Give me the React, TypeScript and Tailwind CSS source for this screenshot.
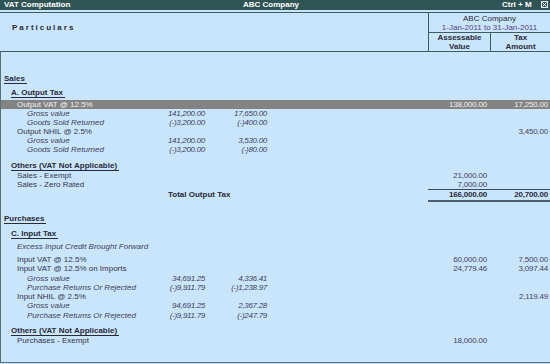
import React from "react";

const GRID = "grid grid-cols-[144px_62px_62px_159px_62px_60px]";

type LineProps = {
  label: string;
  pl: string;
  italic?: boolean;
  s1?: string;
  s2?: string;
  a?: string;
  t?: string;
  hl?: boolean;
  mt?: string;
  h?: string;
};

function Line({ label, pl, italic, s1, s2, a, t, hl, mt = "", h = "h-[9px] leading-[9px]" }: LineProps) {
  const base = hl ? "bg-[#838383] text-[#f2f2f2]" : "text-[#34344a]";
  const it = italic ? "italic text-[#3e3e5a]" : "";
  return (
    <div className={`${GRID} ${h} ${mt} ${base} whitespace-nowrap`}>
      <div className={`${pl} ${it}`}>{label}</div>
      <div className={`text-right pr-[2px] italic tracking-[-0.3px] ${hl ? "" : "text-[#3e3e5a]"}`}>{s1}</div>
      <div className={`text-right pr-[2px] italic tracking-[-0.3px] ${hl ? "" : "text-[#3e3e5a]"}`}>{s2}</div>
      <div />
      <div className={`text-right pr-[3px] tracking-[-0.2px] ${hl ? "" : "text-[#45405f]"}`}>{a}</div>
      <div className={`text-right pr-[2px] tracking-[-0.2px] ${hl ? "" : "text-[#45405f]"}`}>{t}</div>
    </div>
  );
}

function Head({ text, pl, mt }: { text: string; pl: string; mt: string }) {
  return (
    <div className={`h-[10px] ${mt} ${pl}`}>
      <span className="inline-block leading-[8px] font-bold text-[#2a2a38] border-b border-[#2a2a38] pr-[2px]">
        {text}
      </span>
    </div>
  );
}

export default function App() {
  return (
    <div className="w-[550px] h-[364px] bg-[#c9e5fc] overflow-hidden font-['Liberation_Sans',Arial,sans-serif] text-[8px] select-none">
      {/* Title bar */}
      <div className="h-[10px] bg-[#2f5454] text-white font-bold leading-[10px] flex items-center relative">
        <span className="pl-[4px]">VAT Computation</span>
        <span className="absolute left-[243px]">ABC Company</span>
        <span className="absolute left-[502px]">Ctrl + M</span>
        <span className="absolute left-[541px] top-[1px] w-[7px] h-[7px] border border-[#dfe8e8] flex items-center justify-center">
          <svg width="5" height="5" viewBox="0 0 5 5">
            <path d="M0.5 0.5 L4.5 4.5 M4.5 0.5 L0.5 4.5" stroke="#ffffff" strokeWidth="1" />
          </svg>
        </span>
      </div>
      {/* Header */}
      <div className="mt-[2px] h-[40px] border-t border-b border-[#3d5d63] flex">
        <div className="flex-1 pl-[12px] pt-[10px] leading-[9px] font-bold tracking-[2px] text-[#2a2a38]">
          Particulars
        </div>
        <div className="w-[122px] border-l border-[#3d5d63] flex flex-col">
          <div className="h-[20px] border-b border-[#3d5d63] text-center leading-[9px] pt-[1px]">
            <div className="text-[#2a2a38]">ABC Company</div>
            <div className="text-[#5a3f8a]">1-Jan-2011 to 31-Jan-2011</div>
          </div>
          <div className="flex-1 flex font-bold text-[#2a2a38] leading-[9px]">
            <div className="w-[62px] border-r border-[#3d5d63] text-center pt-[0px]">
              <div>Assessable</div>
              <div>Value</div>
            </div>
            <div className="flex-1 text-center pt-[0px]">
              <div>Tax</div>
              <div>Amount</div>
            </div>
          </div>
        </div>
      </div>
      {/* Body */}
      <div className="h-[311px] border-l border-b border-[#59707a] flex flex-col">
        <Head text="Sales" pl="pl-[3px]" mt="mt-[21px]" />
        <Head text="A. Output Tax" pl="pl-[10px]" mt="mt-[4px]" />
        <Line label="Output VAT @ 12.5%" pl="pl-[16px]" a="138,000.00" t="17,250.00" hl mt="mt-[3px]" />
        <Line label="Gross value" pl="pl-[26px]" italic s1="141,200.00" s2="17,650.00" />
        <Line label="Goods Sold Returned" pl="pl-[26px]" italic s1="(-)3,200.00" s2="(-)400.00" />
        <Line label="Output NHIL @ 2.5%" pl="pl-[16px]" t="3,450.00" />
        <Line label="Gross value" pl="pl-[26px]" italic s1="141,200.00" s2="3,530.00" />
        <Line label="Goods Sold Returned" pl="pl-[26px]" italic s1="(-)3,200.00" s2="(-)80.00" />
        <Head text="Others (VAT Not Applicable)" pl="pl-[10px]" mt="mt-[6px]" />
        <Line label="Sales - Exempt" pl="pl-[16px]" a="21,000.00" mt="mt-[1px]" />
        <Line label="Sales - Zero Rated" pl="pl-[16px]" a="7,000.00" />
        {/* Total row */}
        <div className={`${GRID} h-[13px] leading-[10px] font-bold text-[#2a2a38] whitespace-nowrap`}>
          <div className="col-span-4 pl-[167px] pt-[1px]">Total Output Tax</div>
          <div className="border-t border-b-2 border-t-[#3d4d5d] border-b-[#4d5d6d] text-right pr-[3px] tracking-[-0.2px]">166,000.00</div>
          <div className="border-t border-b-2 border-t-[#3d4d5d] border-b-[#4d5d6d] text-right pr-[2px] tracking-[-0.2px]">20,700.00</div>
        </div>
        <Head text="Purchases" pl="pl-[3px]" mt="mt-[11px]" />
        <Head text="C. Input Tax" pl="pl-[10px]" mt="mt-[5px]" />
        <Line label="Excess Input Credit Brought Forward" pl="pl-[16px]" italic mt="mt-[4px]" />
        <Line label="Input VAT @ 12.5%" pl="pl-[16px]" a="60,000.00" t="7,500.00" mt="mt-[4px]" h="h-[9.3px] leading-[9px]" />
        <Line label="Input VAT @ 12.5% on Imports" pl="pl-[16px]" a="24,779.46" t="3,097.44" h="h-[9.3px] leading-[9px]" />
        <Line label="Gross value" pl="pl-[26px]" italic s1="34,691.25" s2="4,336.41" h="h-[9.3px] leading-[9px]" />
        <Line label="Purchase Returns Or Rejected" pl="pl-[26px]" italic s1="(-)9,911.79" s2="(-)1,238.97" h="h-[9.3px] leading-[9px]" />
        <Line label="Input NHIL @ 2.5%" pl="pl-[16px]" t="2,119.49" h="h-[9.3px] leading-[9px]" />
        <Line label="Gross value" pl="pl-[26px]" italic s1="94,691.25" s2="2,367.28" h="h-[9.3px] leading-[9px]" />
        <Line label="Purchase Returns Or Rejected" pl="pl-[26px]" italic s1="(-)9,911.79" s2="(-)247.79" h="h-[9.3px] leading-[9px]" />
        <Head text="Others (VAT Not Applicable)" pl="pl-[10px]" mt="mt-[5px]" />
        <Line label="Purchases - Exempt" pl="pl-[16px]" a="18,000.00" mt="mt-[1px]" />
      </div>
    </div>
  );
}
